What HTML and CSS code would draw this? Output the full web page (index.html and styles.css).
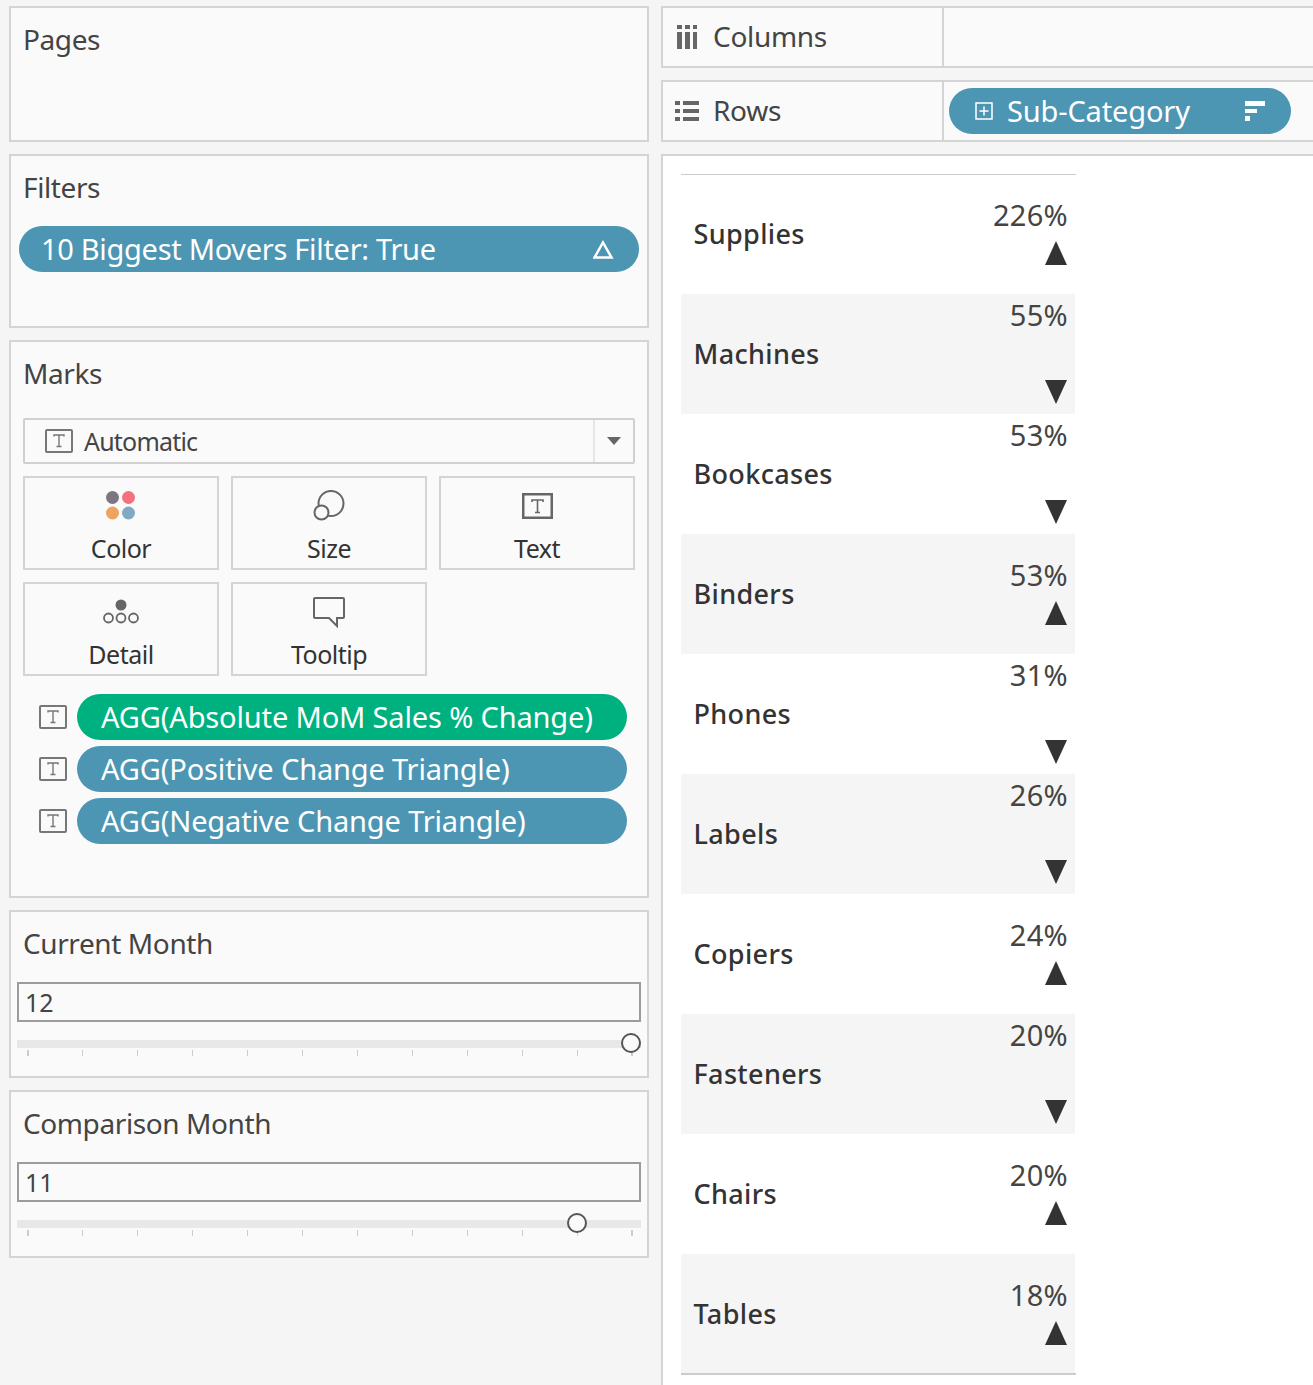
FILE: index.html
```html
<!DOCTYPE html>
<html lang="en">
<head>
<meta charset="utf-8">
<title>Biggest Movers</title>
<link rel="stylesheet" href="styles.css">
</head>
<body>
<svg class="defs" width="0" height="0" aria-hidden="true">
  <symbol id="t-box" viewBox="0 0 28 24">
    <rect x="1" y="1" width="26" height="22" rx="1" fill="none" stroke="#777" stroke-width="2"/>
    <path d="M9 7.5V6h10v1.5M14 6v11M11.5 17.5h5" fill="none" stroke="#777" stroke-width="1.4"/>
  </symbol>
</svg>
<div class="app">
  <aside class="side">
    <section class="panel pages"><h2 class="title">Pages</h2></section>
    <section class="panel filters">
      <h2 class="title">Filters</h2>
      <div class="pill blue filter-pill"><span>10 Biggest Movers Filter: True</span>
        <svg class="delta" width="22" height="20" viewBox="0 0 22 20"><path d="M10 3.500 18.500 18.500H1.500Z" fill="none" stroke="#fff" stroke-width="2.500"/></svg>
      </div>
    </section>
    <section class="panel marks">
      <h2 class="title">Marks</h2>
      <div class="select">
        <div class="select-main"><svg class="t-icon" width="28" height="24"><use href="#t-box"/></svg><span>Automatic</span></div>
        <div class="select-arrow"><span class="caret"></span></div>
      </div>
      <div class="cards">
        <div class="card">
          <svg class="card-icon" width="32" height="32" viewBox="0 0 32 32"><circle cx="7.500" cy="7.500" r="6.500" fill="#7b7680"/><circle cx="23.500" cy="7.500" r="6.500" fill="#f4717f"/><circle cx="7.500" cy="23" r="6.500" fill="#eda45f"/><circle cx="23.500" cy="23" r="6.500" fill="#80a9c4"/></svg>
          <span>Color</span>
        </div>
        <div class="card">
          <svg class="card-icon" width="32" height="32" viewBox="0 0 32 32"><circle cx="18" cy="13.500" r="12.500" fill="none" stroke="#666" stroke-width="2"/><circle cx="8.500" cy="22.500" r="7" fill="#fafafa" stroke="#666" stroke-width="2"/></svg>
          <span>Size</span>
        </div>
        <div class="card">
          <svg class="card-icon" width="32" height="32" viewBox="0 0 32 32"><rect x="2.250" y="4.250" width="28.500" height="23.500" fill="none" stroke="#666" stroke-width="2.500"/><path d="M11 12v-2h11v2M16.500 10v12M14 22.500h5" fill="none" stroke="#666" stroke-width="1.600"/></svg>
          <span>Text</span>
        </div>
        <div class="card">
          <svg class="card-icon" width="40" height="32" viewBox="0 0 40 32"><circle cx="20" cy="9" r="5.500" fill="#666"/><circle cx="7.500" cy="22" r="4.500" fill="none" stroke="#666" stroke-width="1.800"/><circle cx="20" cy="22" r="4.500" fill="none" stroke="#666" stroke-width="1.800"/><circle cx="32.500" cy="22" r="4.500" fill="none" stroke="#666" stroke-width="1.800"/></svg>
          <span>Detail</span>
        </div>
        <div class="card">
          <svg class="card-icon" width="32" height="32" viewBox="0 0 32 32"><path d="M1 3Q1 2 2 2h28q1 0 1 1v18q0 1-1 1h-6v8l-8-8H2q-1 0-1-1Z" fill="none" stroke="#666" stroke-width="2"/></svg>
          <span>Tooltip</span>
        </div>
      </div>
      <div class="mark-fields">
        <div class="mark-field"><svg width="28" height="24"><use href="#t-box"/></svg><div class="pill green">AGG(Absolute MoM Sales % Change)</div></div>
        <div class="mark-field"><svg width="28" height="24"><use href="#t-box"/></svg><div class="pill blue">AGG(Positive Change Triangle)</div></div>
        <div class="mark-field"><svg width="28" height="24"><use href="#t-box"/></svg><div class="pill blue">AGG(Negative Change Triangle)</div></div>
      </div>
    </section>
    <section class="panel param">
      <h2 class="title">Current Month</h2>
      <div class="input">12</div>
      <div class="slider">
        <div class="track"></div>
        <div class="thumb at-12"></div>
        <div class="ticks"><i></i><i></i><i></i><i></i><i></i><i></i><i></i><i></i><i></i><i></i><i></i><i></i></div>
      </div>
    </section>
    <section class="panel param">
      <h2 class="title">Comparison Month</h2>
      <div class="input">11</div>
      <div class="slider">
        <div class="track"></div>
        <div class="thumb at-11"></div>
        <div class="ticks"><i></i><i></i><i></i><i></i><i></i><i></i><i></i><i></i><i></i><i></i><i></i><i></i></div>
      </div>
    </section>
  </aside>
  <main class="main">
    <div class="shelf">
      <div class="shelf-label">
        <svg class="shelf-icon" width="24" height="24" viewBox="0 0 24 24"><path d="M2 0h5v4H2zM10 0h5v4h-5zM18 0h4v4h-4zM2 7h5v17H2zM10 7h5v17h-5zM18 7h4v17h-4z" fill="#666"/></svg>
        <span class="shelf-name">Columns</span>
      </div>
      <div class="shelf-body"></div>
    </div>
    <div class="shelf">
      <div class="shelf-label">
        <svg class="shelf-icon" width="24" height="24" viewBox="0 0 24 24"><path d="M0 2h5v4H0zM8 2h16v4H8zM0 10h5v4H0zM8 10h16v4H8zM0 18h5v4H0zM8 18h16v4H8z" fill="#666"/></svg>
        <span class="shelf-name">Rows</span>
      </div>
      <div class="shelf-body">
        <div class="pill blue row-pill">
          <svg class="plus" width="18" height="18" viewBox="0 0 18 18"><rect x="1" y="1" width="16" height="16" fill="none" stroke="#fff" stroke-width="1.500"/><path d="M9 4.500v9M4.500 9h9" stroke="#fff" stroke-width="1.500"/></svg>
          <span class="pill-text">Sub-Category</span>
          <svg class="sort" width="22" height="20" viewBox="0 0 22 20"><path d="M1 0h20v5H1zM1 8h12v4H1zM1 15h5v5H1z" fill="#fff"/></svg>
        </div>
      </div>
    </div>
    <div class="view">
      <div class="table">
        <div class="row up"><span class="name">Supplies</span><div class="vals"><span class="val">226%</span><svg class="tri" width="24" height="24" viewBox="0 0 24 24"><path d="M12 0 23 24H1Z"/></svg></div></div>
        <div class="row down alt"><span class="name">Machines</span><div class="vals"><span class="val">55%</span><svg class="tri" width="24" height="24" viewBox="0 0 24 24"><path d="M12 24 23 0H1Z"/></svg></div></div>
        <div class="row down"><span class="name">Bookcases</span><div class="vals"><span class="val">53%</span><svg class="tri" width="24" height="24" viewBox="0 0 24 24"><path d="M12 24 23 0H1Z"/></svg></div></div>
        <div class="row up alt"><span class="name">Binders</span><div class="vals"><span class="val">53%</span><svg class="tri" width="24" height="24" viewBox="0 0 24 24"><path d="M12 0 23 24H1Z"/></svg></div></div>
        <div class="row down"><span class="name">Phones</span><div class="vals"><span class="val">31%</span><svg class="tri" width="24" height="24" viewBox="0 0 24 24"><path d="M12 24 23 0H1Z"/></svg></div></div>
        <div class="row down alt"><span class="name">Labels</span><div class="vals"><span class="val">26%</span><svg class="tri" width="24" height="24" viewBox="0 0 24 24"><path d="M12 24 23 0H1Z"/></svg></div></div>
        <div class="row up"><span class="name">Copiers</span><div class="vals"><span class="val">24%</span><svg class="tri" width="24" height="24" viewBox="0 0 24 24"><path d="M12 0 23 24H1Z"/></svg></div></div>
        <div class="row down alt"><span class="name">Fasteners</span><div class="vals"><span class="val">20%</span><svg class="tri" width="24" height="24" viewBox="0 0 24 24"><path d="M12 24 23 0H1Z"/></svg></div></div>
        <div class="row up"><span class="name">Chairs</span><div class="vals"><span class="val">20%</span><svg class="tri" width="24" height="24" viewBox="0 0 24 24"><path d="M12 0 23 24H1Z"/></svg></div></div>
        <div class="row up alt"><span class="name">Tables</span><div class="vals"><span class="val">18%</span><svg class="tri" width="24" height="24" viewBox="0 0 24 24"><path d="M12 0 23 24H1Z"/></svg></div></div>
      </div>
    </div>
  </main>
</div>
</body>
</html>
```
FILE: styles.css
```css
* { box-sizing: border-box; }
html, body { margin: 0; height: 1385px; overflow: hidden; }
body { background: #f5f5f5; color: #333; font-family: "Noto Sans", sans-serif; }
.defs { position: absolute; }
.app { display: flex; gap: 12px; padding: 6px 0 0 9px; height: 1385px; }
.side { width: 640px; flex: none; display: flex; flex-direction: column; gap: 12px; }
.main { flex: 1; display: flex; flex-direction: column; gap: 12px; min-width: 0; }
.panel { background: #fafafa; border: 2px solid #d4d4d4; padding: 0 12px; }
.title { margin: 0; padding-top: 12px; font-size: 28px; line-height: 38px; font-weight: 400; color: #444; letter-spacing: -0.4px; }
.pages { height: 136px; }
.filters { height: 174px; }
.marks { height: 558px; }
.param { height: 168px; padding: 0 6px; }
.param .title { padding-left: 6px; }
.pill { height: 46px; border-radius: 23px; color: #fff; font-size: 29px; line-height: 46px; display: flex; align-items: center; white-space: nowrap; letter-spacing: -0.15px; }
.blue { background: #4c96b4; }
.green { background: #00b180; }
.filter-pill { margin: 20px -4px 0 -4px; padding: 0 24px 0 22px; justify-content: space-between; letter-spacing: -0.3px; }
.select { margin-top: 26px; height: 46px; border: 2px solid #d0d0d0; border-radius: 2px; display: flex; }
.select-main { flex: 1; display: flex; align-items: center; gap: 11px; padding-left: 20px; font-size: 25px; color: #444; letter-spacing: -0.8px; }
.select-arrow { width: 40px; border-left: 2px solid #e6e6e6; display: flex; align-items: center; justify-content: center; }
.caret { width: 0; height: 0; border-left: 7px solid transparent; border-right: 7px solid transparent; border-top: 8px solid #666; }
.cards { margin-top: 12px; display: grid; grid-template-columns: repeat(3, 196px); grid-auto-rows: 94px; gap: 12px; }
.card { border: 2px solid #d4d4d4; display: flex; flex-direction: column; align-items: center; font-size: 25px; line-height: 32px; letter-spacing: -0.5px; color: #333; padding-top: 12px; }
.card-icon { height: 32px; margin-bottom: 10px; }
.mark-fields { margin-top: 18px; display: flex; flex-direction: column; gap: 6px; padding-left: 16px; }
.mark-field { display: flex; align-items: center; gap: 10px; }
.mark-field .pill { width: 550px; padding-left: 24px; }
.input { margin-top: 20px; height: 40px; border: 2px solid #9c9c9c; font-size: 25px; line-height: 36px; padding-left: 6px; color: #444; }
.slider { position: relative; margin-top: 18px; height: 30px; }
.track { height: 8px; background: #e8e8e8; }
.thumb { position: absolute; top: -7px; width: 20px; height: 20px; border-radius: 50%; background: #fafafa; border: 2.500px solid #555; }
.at-12 { left: 604px; }
.at-11 { left: 550px; }
.ticks { display: flex; justify-content: space-between; padding: 0 8px 0 10px; margin-top: 2px; }
.ticks i { width: 1.500px; height: 6px; background: #ccc; }
.shelf { height: 62px; display: flex; background: #fafafa; border: 2px solid #d4d4d4; border-right: 0; }
.shelf-label { width: 281px; border-right: 2px solid #d4d4d4; display: flex; align-items: center; gap: 14px; padding-left: 12px; font-size: 28px; color: #444; letter-spacing: -0.3px; }
.shelf-name { padding-bottom: 2px; }
.shelf-body { flex: 1; display: flex; align-items: center; padding-left: 5px; }
.row-pill { width: 342px; padding: 0 25px 0 26px; }
.pill-text { flex: 1; padding-left: 14px; }
.view { flex: 1; background: #fff; border: 2px solid #d4d4d4; border-right: 0; border-bottom: 0; padding: 18px 0 0 18px; }
.table { width: 395px; border-top: 1px solid #ccc; border-bottom: 2px solid #ccc; }
.row { height: 120px; margin-right: 1px; display: flex; align-items: center; justify-content: space-between; padding: 0 6px 0 12.500px; }
.row:first-child { margin-top: -1px; }
.row:last-child { height: 119px; }
.row:last-child .name { margin-bottom: 0; }
.alt { background: #f5f5f5; }
.name { font-size: 27px; font-weight: 500; color: #333; letter-spacing: 0.35px; margin-bottom: 2px; }
.vals { display: flex; flex-direction: column; align-items: flex-end; height: 120px; }
.up .vals { padding-top: 20px; }
.down .vals { padding-top: 0; }
.val { font-size: 29px; line-height: 40px; color: #444; letter-spacing: 0.3px; padding-top: 1px; margin-right: 1px; }
.tri { fill: #333; display: block; margin: 6px 1px 0 0; }
.down .tri { margin-top: 45px; }
```
